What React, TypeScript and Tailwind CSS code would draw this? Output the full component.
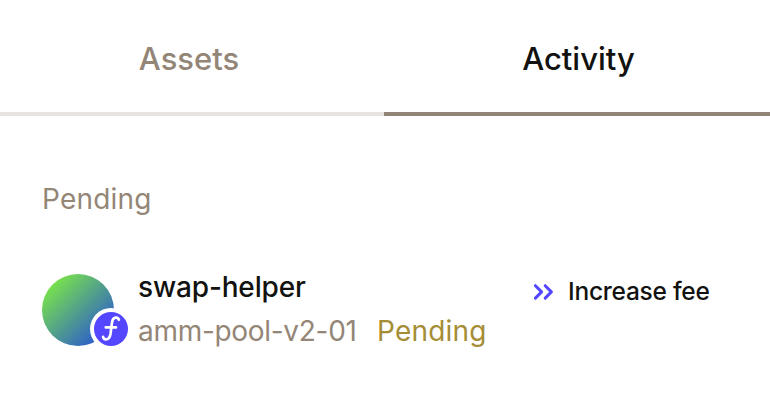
function Avatar() {
  return (
    <div className="relative size-[72px] shrink-0">
      <div className="size-[72px] rounded-full bg-[linear-gradient(135deg,#7fee40_7%,#2450d8_93%)]" />
      <div className="absolute left-[48px] top-[34px] flex size-[42px] items-center justify-center rounded-full bg-white">
        <svg width="34" height="34" viewBox="0 0 34 34" fill="none">
          <circle cx="17" cy="17" r="17" fill="#5546ff" />
          <path
            d="M24.9 7.8C24.3 6 23 5.3 21.4 5.6C19.3 6 18.4 7.8 18 10.4L16.5 22C15.9 25.6 14.4 27.3 12 27.3C10.4 27.3 9.3 26.4 9.1 24.8M11.8 15.4H22"
            stroke="#fff"
            strokeWidth="2.7"
            strokeLinecap="round"
          />
        </svg>
      </div>
    </div>
  );
}

export default function App() {
  return (
    <div className="h-[406px] w-[770px] overflow-hidden bg-white font-['Inter','Liberation_Sans',sans-serif] text-[#121210]">
      <div className="flex h-[116px] text-[31px] font-medium leading-[40px]">
        <div className="flex w-[384px] justify-center border-b-4 border-[#e8e4df] pr-[6px] pt-[39px] text-[#948677]">
          <span>Assets</span>
        </div>
        <div className="flex flex-1 justify-center border-b-4 border-[#918474] pl-[3px] pt-[39px]">
          <span>Activity</span>
        </div>
      </div>
      <div className="px-[42px] pt-[63px]">
        <div className="text-[28px] leading-[40px] tracking-[0.2px] text-[#948677]">Pending</div>
        <div className="mt-12 flex items-start">
          <div className="pt-[7px]">
            <Avatar />
          </div>
          <div className="ml-6 w-[394px] whitespace-nowrap text-[28px]">
            <div className="font-medium leading-[40px] tracking-[-0.15px]">swap-helper</div>
            <div className="mt-1 flex leading-[40px]">
              <span className="w-[239px] tracking-[-0.3px] text-[#948677]">amm-pool-v2-01</span>
              <span className="tracking-[0.2px] text-[#a58d35]">Pending</span>
            </div>
          </div>
          <div className="flex items-center pt-[6px] text-[24.5px] font-medium leading-[36px]">
            <svg width="24" height="20" viewBox="0 0 24 20" fill="none" className="mt-[2px]">
              <path
                d="M3.4 3.7L9.6 9.9L3.4 16.1M13.2 3.7L19.4 9.9L13.2 16.1"
                stroke="#5546ff"
                strokeWidth="3"
                strokeLinecap="round"
                strokeLinejoin="round"
              />
            </svg>
            <span className="ml-3 whitespace-nowrap tracking-[-0.25px]">Increase fee</span>
          </div>
        </div>
      </div>
    </div>
  );
}
